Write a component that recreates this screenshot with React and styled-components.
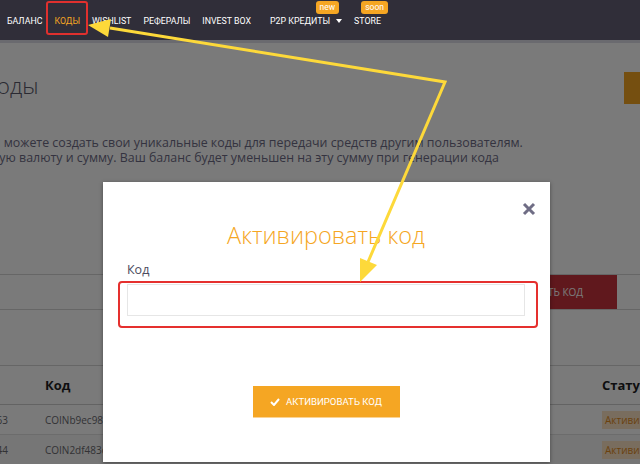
import React from 'react';
import styled, { createGlobalStyle } from 'styled-components';

const GlobalStyle = createGlobalStyle`
  body {
    margin: 0;
    overflow: hidden;
    font-family: 'Open Sans', 'Liberation Sans', sans-serif;
  }
`;

const Screen = styled.div`
  position: relative;
  width: 640px;
  height: 464px;
  overflow: hidden;
  background: #fff;
`;

const NavBar = styled.nav`
  position: relative;
  z-index: 3;
  height: 40px;
  background: #302e39;
  border-bottom: 3px solid #6a6a6f;
  display: flex;
  align-items: center;
  padding-left: 7px;
  gap: 12px;
  box-sizing: content-box;
`;

const NavItem = styled.a`
  position: relative;
  font-family: Roboto, 'Liberation Sans', sans-serif;
  font-size: 8.8px;
  line-height: 12px;
  text-transform: uppercase;
  color: ${(p) => (p.active ? '#f5a623' : '#fff')};
  white-space: nowrap;
  display: flex;
  align-items: center;
  gap: 6px;
  margin-left: ${(p) => p.shift || 0}px;
  padding-top: 1px;
`;

const Badge = styled.span`
  position: absolute;
  top: -13px;
  right: ${(p) => p.right}px;
  background: #f5a623;
  color: #fff;
  font-size: 8.5px;
  line-height: 13px;
  padding: 0 4px;
  border-radius: 3px;
  text-transform: none;
`;

const Caret = styled.span`
  width: 0;
  height: 0;
  border-left: 3px solid transparent;
  border-right: 3px solid transparent;
  border-top: 4px solid #fff;
`;

const ActiveMark = styled.span`
  position: absolute;
  left: -8px;
  right: -8px;
  top: -13px;
  bottom: -8px;
  border: 2px solid #e0302e;
  border-radius: 3px;
`;

const Page = styled.main`
  color: #5a5a68;
`;

const Heading = styled.h1`
  margin: 27px 0 0 -16px;
  font-size: 22.5px;
  font-weight: 300;
  line-height: 32px;
  color: #58586a;
`;

const Intro = styled.div`
  margin-top: 33px;
  font-size: 12.4px;
  line-height: 15px;
  color: #6e6c86;
`;

const IntroLine = styled.div`
  white-space: nowrap;
  margin-left: ${(p) => p.offset}px;
`;

const PromoBlock = styled.div`
  position: absolute;
  top: 72px;
  right: 0;
  width: 16px;
  height: 32px;
  background: #f5a623;
`;

const FormRow = styled.div`
  margin-top: 109px;
  height: 34px;
  border-top: 1px solid #d6d6d6;
  border-bottom: 1px solid #d6d6d6;
  display: flex;
  justify-content: flex-end;
  padding-right: 23px;
`;

const CreateButton = styled.div`
  width: 136px;
  background: #c8343d;
  color: #fff;
  font-size: 10px;
  display: flex;
  align-items: center;
  justify-content: center;
  padding-left: 4px;
  text-transform: uppercase;
  white-space: nowrap;
`;

const Table = styled.div`
  margin-top: 55px;
  border-top: 1px solid #d6d6d6;
`;

const Row = styled.div`
  display: grid;
  grid-template-columns: 45px 1fr 38px;
  align-items: center;
  height: ${(p) => (p.head ? 38 : 29)}px;
  border-bottom: 1px solid ${(p) => (p.head ? '#cfcfcf' : '#e2e2e2')};
  background: ${(p) => (p.shade ? '#f6f6f6' : '#fff')};
  font-size: ${(p) => (p.head ? 13 : 10)}px;
  font-weight: ${(p) => (p.head ? 700 : 400)};
  color: ${(p) => (p.head ? '#1f1f24' : '#6a6a70')};
  white-space: nowrap;
  overflow: hidden;
`;

const Cell = styled.div`
  overflow: hidden;
`;

const IdCell = styled.div`
  display: flex;
  justify-content: flex-end;
  overflow: hidden;
  padding-right: 37px;
`;

const Status = styled.span`
  display: inline-block;
  background: #fde3c4;
  color: #e08a1c;
  font-size: 10px;
  padding: 2px 3px;
`;

const Backdrop = styled.div`
  position: absolute;
  left: 0;
  right: 0;
  top: 43px;
  bottom: 0;
  background: rgba(0, 0, 0, 0.52);
`;

const Modal = styled.div`
  position: absolute;
  left: 103px;
  top: 182px;
  width: 447px;
  height: 280px;
  background: #fff;
  box-shadow: 0 1px 4px rgba(0, 0, 0, 0.4);
  box-sizing: border-box;
  padding: 20px 25px 0 24px;
  display: flex;
  flex-direction: column;
`;

const CloseButton = styled.button`
  align-self: flex-end;
  border: 0;
  background: none;
  padding: 0;
  margin-right: -11px;
  width: 14px;
  height: 14px;
  display: flex;
`;

const ModalTitle = styled.h2`
  margin: 4px 0 0;
  text-align: center;
  font-size: 23.5px;
  font-weight: 300;
  line-height: 30px;
  color: #f5a623;
`;

const Label = styled.label`
  margin-top: 12px;
  font-size: 12.5px;
  line-height: 16px;
  color: #4c4b5e;
`;

const Input = styled.input`
  margin-top: 6px;
  height: 32px;
  border: 1px solid #e6e6e6;
  box-sizing: border-box;
  outline: none;
`;

const Submit = styled.button`
  margin-top: 70px;
  align-self: center;
  width: 147px;
  height: 32px;
  border: 0;
  border-bottom: 1px solid #fbd394;
  background: #f5a623;
  color: #fff;
  font-family: Roboto, 'Liberation Sans', sans-serif;
  font-size: 9.6px;
  text-transform: uppercase;
  display: flex;
  align-items: center;
  justify-content: center;
  gap: 6px;
  padding: 0;
`;

const Annotations = styled.svg`
  position: absolute;
  left: 0;
  top: 0;
  z-index: 5;
  pointer-events: none;
`;

export default function App() {
  return (
    <Screen>
      <GlobalStyle />
      <NavBar>
        <NavItem>Баланс</NavItem>
        <NavItem active>
          Коды
          <ActiveMark />
        </NavItem>
        <NavItem>Wishlist</NavItem>
        <NavItem>Рефералы</NavItem>
        <NavItem>Invest box</NavItem>
        <NavItem shift={7}>
          P2P Кредиты
          <Caret />
          <Badge right={3}>new</Badge>
        </NavItem>
        <NavItem>
          Store
          <Badge right={-7}>soon</Badge>
        </NavItem>
      </NavBar>

      <Page>
        <Heading>Коды</Heading>
        <Intro>
          <IntroLine offset={-17}>
            Вы можете создать свои уникальные коды для передачи средств другим пользователям.
          </IntroLine>
          <IntroLine offset={-27}>
            Любую валюту и сумму. Ваш баланс будет уменьшен на эту сумму при генерации кода
          </IntroLine>
        </Intro>
        <FormRow>
          <CreateButton>Создать код</CreateButton>
        </FormRow>
        <Table>
          <Row head>
            <Cell />
            <Cell>Код</Cell>
            <Cell>Статус</Cell>
          </Row>
          <Row>
            <IdCell>1263</IdCell>
            <Cell>COINb9ec98a1f3</Cell>
            <Cell>
              <Status>Активирован</Status>
            </Cell>
          </Row>
          <Row shade>
            <IdCell>1244</IdCell>
            <Cell>COIN2df483c7e0</Cell>
            <Cell>
              <Status>Активирован</Status>
            </Cell>
          </Row>
        </Table>
      </Page>
      <PromoBlock />

      <Backdrop />

      <Modal>
        <CloseButton aria-label="Закрыть">
          <svg width="14" height="14" viewBox="0 0 14 14">
            <path d="M2 2 L12 12 M12 2 L2 12" stroke="#6f6d85" strokeWidth="3" />
          </svg>
        </CloseButton>
        <ModalTitle>Активировать код</ModalTitle>
        <Label>Код</Label>
        <Input />
        <Submit>
          <svg width="10" height="8" viewBox="0 0 10 8">
            <path d="M1 4 L4 7 L9 1" stroke="#fff" strokeWidth="2" fill="none" />
          </svg>
          Активировать код
        </Submit>
      </Modal>

      <Annotations width="640" height="464" viewBox="0 0 640 464">
        <rect x="119" y="282" width="418" height="45" rx="3" fill="none" stroke="#e5302e" strokeWidth="2" />
        <polyline points="110,28 445,82 368,262" fill="none" stroke="#fdd93a" strokeWidth="3" strokeLinejoin="miter" />
        <polygon points="88,25 111,19 108,37" fill="#fdd93a" />
        <polygon points="360,282 377,265 360,258" fill="#fdd93a" />
      </Annotations>
    </Screen>
  );
}
